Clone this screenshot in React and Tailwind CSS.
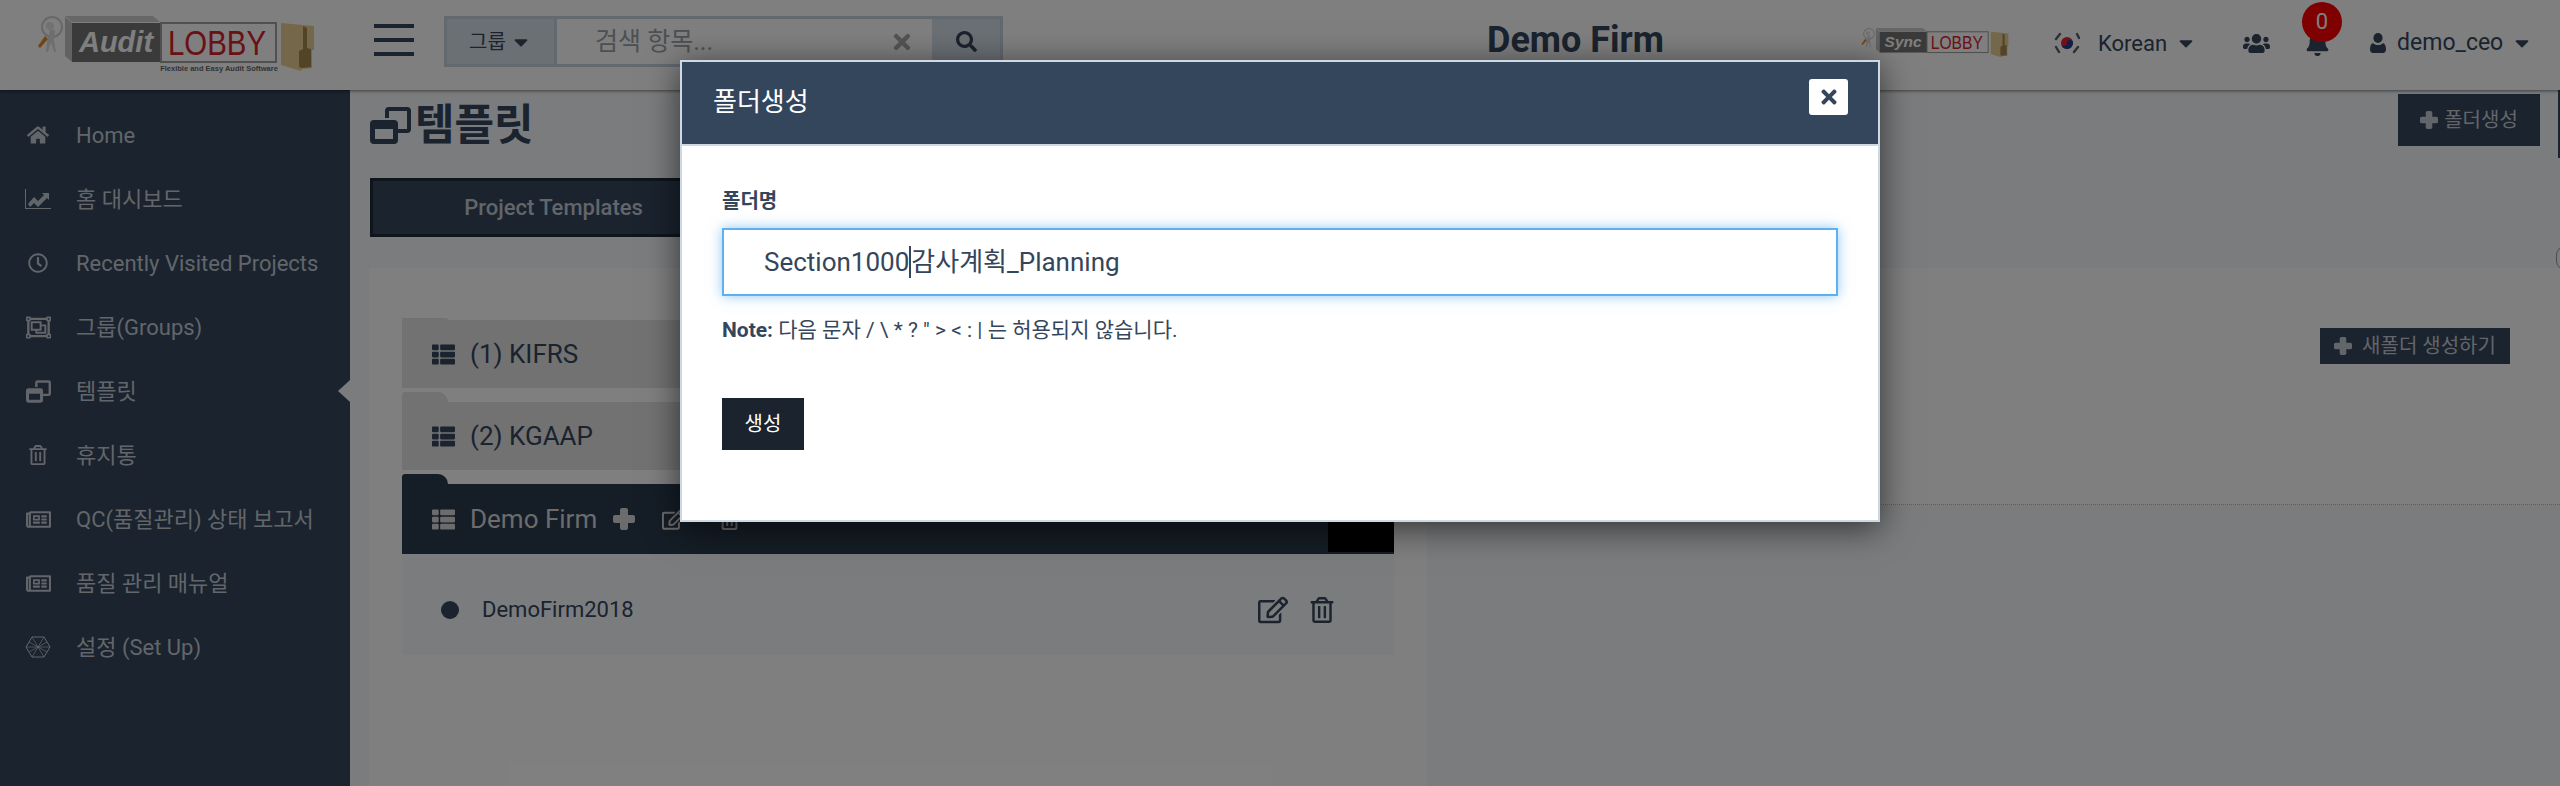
import React from "react";
import {
  FaHome,
  FaRegClock,
  FaRegObjectGroup,
  FaRegTrashAlt,
  FaRegNewspaper,
  FaThList,
  FaRegEdit,
  FaUsers,
  FaBell,
  FaTimes,
  FaSearch,
  FaCaretDown,
} from "react-icons/fa";

function LineChartIcon() {
  return (
    <svg width="26" height="20" viewBox="0 0 26 20" fill="currentColor">
      <path d="M0 0h1v19h25v1H0z" />
      <path d="M3 15l6-7 4 4 6-6-2-2h7v7l-2-2-9 9-4-4-4 4z" />
    </svg>
  );
}

function HexIcon() {
  return (
    <svg width="26" height="22" viewBox="0 0 26 22" fill="none" stroke="currentColor" strokeWidth="1">
      <path d="M7 1h12l6 10-6 10H7L1 11z" />
      <path d="M7 1l12 20M19 1L7 21M1 11h24M4 6l18 10M22 6L4 16" strokeWidth="0.7" />
    </svg>
  );
}

function CloneIcon({ width, height }) {
  return (
    <svg width={width} height={height} viewBox="0 0 41 37" fill="currentColor" fillRule="evenodd">
      <path d="M19 0h18a4 4 0 0 1 4 4v18a4 4 0 0 1-4 4H28v-4h9V4H19v7h-4V4a4 4 0 0 1 4-4z" />
      <path d="M4 13h20a4 4 0 0 1 4 4v16a4 4 0 0 1-4 4H4a4 4 0 0 1-4-4V17a4 4 0 0 1 4-4zM5 22v10h18V22z" />
    </svg>
  );
}

function PlusIcon({ size }) {
  return (
    <svg width={size} height={size} viewBox="0 0 22 22" fill="currentColor">
      <rect x="7" y="0" width="8" height="22" rx="2" />
      <rect x="0" y="7" width="22" height="8" rx="2" />
    </svg>
  );
}

function UserIcon() {
  return (
    <svg width="16" height="20" viewBox="0 0 16 20" fill="currentColor">
      <ellipse cx="8" cy="5" rx="4.6" ry="5" />
      <path d="M3 10c1 1.4 3 2 5 2s4-.6 5-2c2 .5 3 3 3 6.500 0 2-1.300 3.500-3 3.500H3c-1.700 0-3-1.500-3-3.500C0 13 1 10.500 3 10z" />
    </svg>
  );
}

function KoreaFlag() {
  return (
    <svg width="26" height="22" viewBox="0 0 26 22">
      <circle cx="13" cy="11" r="6" fill="#e2202c" />
      <path d="M7 11a6 6 0 0 0 12 0 3 3 0 0 0-6 0 3 3 0 0 1-6 0z" fill="#1b3f94" />
      <g stroke="#5a5f66" strokeWidth="2.4" strokeLinecap="round">
        <path d="M2 7l4-5M23 2l2 4M2 15l3 5M24 15l-4 5" />
      </g>
    </svg>
  );
}

function LobbyLogo({ word, size, tagline, className }) {
  return (
    <svg viewBox="0 0 280 58" className={className}>
      <circle cx="15" cy="11" r="10" fill="none" stroke="#d0d0d0" strokeWidth="2" />
      <circle cx="13" cy="10" r="4" fill="#e4e4e4" />
      <path d="M13 14l-3 12-1 10h2l3-10 3 10h2l-2-12 1-10z" fill="#dcdcdc" />
      <path d="M8 20L1 30l2 2 8-9z" fill="#e08a22" />
      <path d="M28 0h88l7 6H35z" fill="#cfcfcf" />
      <path d="M28 1l7 6v39l-7-6z" fill="#c4c4c4" />
      <rect x="35" y="7" width="89" height="39" fill="#747474" />
      <rect x="124" y="7" width="115" height="39" fill="#ffffff" stroke="#a0a0a0" strokeWidth="2" />
      <text x="79" y="36" textAnchor="middle" fontFamily="Liberation Sans" fontWeight="700" fontStyle="italic" fontSize={size} fill="#ffffff">
        {word}
      </text>
      <text x="180" y="39" textAnchor="middle" fontFamily="Liberation Sans" fontSize="35" fill="#d4222c" textLength="98" lengthAdjust="spacingAndGlyphs">
        LOBBY
      </text>
      {tagline && (
        <text x="182" y="55" textAnchor="middle" fontFamily="Liberation Sans" fontWeight="700" fontSize="7.500" fill="#666666">
          Flexible and Easy Audit Software
        </text>
      )}
      <path d="M244 7l33 3v24h-2v18l-10 1-1 2-20-6z" fill="#e9cf94" />
      <path d="M266 10l4 2v20l4 1v18l-9 1-3-1v-16l4-2z" fill="#a5894f" />
    </svg>
  );
}

const menu = [
  { label: "Home", icon: <FaHome size={22} /> },
  { label: "홈 대시보드", icon: <LineChartIcon /> },
  { label: "Recently Visited Projects", icon: <FaRegClock size={20} /> },
  { label: "그룹(Groups)", icon: <FaRegObjectGroup size={25} /> },
  { label: "템플릿", icon: <CloneIcon width={25} height={23} />, active: true },
  { label: "휴지통", icon: <FaRegTrashAlt size={20} /> },
  { label: "QC(품질관리) 상태 보고서", icon: <FaRegNewspaper size={25} /> },
  { label: "품질 관리 매뉴얼", icon: <FaRegNewspaper size={25} /> },
  { label: "설정 (Set Up)", icon: <HexIcon /> },
];

function Header() {
  return (
    <header className="relative z-10 flex h-[90px] items-center bg-white shadow-[0_1px_3px_rgba(0,0,0,0.5)]">
      <LobbyLogo word="Audit" size="29" tagline className="ml-[37px] h-[58px] w-[280px] shrink-0" />
      <div className="mb-[10px] ml-[57px] flex w-[40px] flex-col gap-[10px]">
        <span className="h-[4px] bg-[#34465c]" />
        <span className="h-[4px] bg-[#34465c]" />
        <span className="h-[4px] bg-[#34465c]" />
      </div>
      <div className="mb-[7px] ml-[30px] flex h-[51px] w-[559px] border-[3px] border-[#c5d2de] bg-white">
        <div className="flex w-[110px] items-center justify-center gap-[4px] border-r-[3px] border-[#c5d2de] bg-[#d7e1ea] text-[20px] text-[#34465c]">
          그룹
          <FaCaretDown size={22} />
        </div>
        <div className="flex flex-1 items-center justify-between pl-[38px] pr-[18px] text-[25px] text-[#9aa0a6]">
          검색 항목...
          <FaTimes size={24} className="text-[#a9a9a9]" />
        </div>
        <div className="flex w-[68px] items-center justify-center bg-[#d7e1ea] text-[#34465c]">
          <FaSearch size={21} />
        </div>
      </div>
      <div className="mb-[10px] ml-[484px] text-[36px] font-bold text-[#34465c]">Demo Firm</div>
      <div className="mb-[4px] flex items-center text-[#34465c]">
        <LobbyLogo word="Sync" size="29" className="ml-[197px] h-[31px] w-[149px] shrink-0" />
        <div className="ml-[44px] flex items-center text-[22px]">
          <KoreaFlag />
          <span className="ml-[18px]">Korean</span>
          <FaCaretDown size={22} className="ml-[8px]" />
        </div>
        <FaUsers size={27} className="ml-[46px]" />
        <div className="relative ml-[35px]">
          <FaBell size={25} />
          <span className="absolute left-[-3px] top-[-29px] flex h-[40px] w-[40px] items-center justify-center rounded-full bg-[#ff0000] text-[22px] text-white">
            0
          </span>
        </div>
        <span className="ml-[40px]">
          <UserIcon />
        </span>
        <span className="ml-[11px] text-[23px]">demo_ceo</span>
        <FaCaretDown size={22} className="ml-[8px]" />
      </div>
    </header>
  );
}

function Sidebar() {
  return (
    <aside className="w-[350px] shrink-0 bg-[#34465c] pt-[13px] text-[#c4ccd4]">
      {menu.map((item) => (
        <div key={item.label} className="relative flex h-[64px] items-center pl-[25px] text-[22px]">
          <span className="flex w-[26px] justify-center">{item.icon}</span>
          <span className="ml-[25px]">{item.label}</span>
          {item.active && (
            <span className="absolute right-0 top-[21px] h-0 w-0 border-y-[11px] border-r-[12px] border-y-transparent border-r-[#f6f8fc]" />
          )}
        </div>
      ))}
    </aside>
  );
}

function Folder({ tabHeight, dark, children }) {
  return (
    <div className="mb-[4px]">
      <div className={`${tabHeight} w-[46px] rounded-tl-[6px] rounded-tr-[18px] ${dark ? "bg-[#2a3b4c]" : "bg-[#e4e4e4]"}`} />
      <div className={`flex items-stretch ${dark ? "h-[70px] bg-[#2a3b4c] text-[#d8d8d8]" : "h-[68px] bg-[#e4e4e4] text-[#34465c]"}`}>
        {children}
      </div>
    </div>
  );
}

function FolderLabel({ label }) {
  return (
    <div className="flex items-center pl-[30px] text-[26px]">
      <FaThList size={23} />
      <span className="ml-[15px]">{label}</span>
    </div>
  );
}

function Main() {
  return (
    <main className="relative min-w-0 flex-1 bg-[#f6f8fc]">
      <div className="flex h-[74px] justify-between pl-[20px] pr-[20px] pt-[4px]">
        <h1 className="mt-[9px] flex h-[44px] items-center text-[43px] font-bold text-[#34465c]">
          <CloneIcon width={41} height={37} />
          <span className="ml-[4px]">템플릿</span>
        </h1>
        <button className="flex h-[52px] w-[142px] items-center justify-center gap-[6px] bg-[#34465c] text-[20px] text-[#c4ccd4]">
          <PlusIcon size={18} />
          폴더생성
        </button>
      </div>
      <div className="ml-[20px] mt-[14px] flex h-[59px] w-[367px] items-center justify-center border-[3px] border-[#1f2a37] bg-[#34465c] text-[22px] font-medium text-[#c4ccd4]">
        Project Templates
      </div>
      <div className="mt-[31px] ml-[19px] flex h-[518px] bg-[#f6f8fc]">
        <div className="w-[1058px] bg-white pl-[33px] pt-[50px]">
          <div className="w-[992px]">
            <Folder tabHeight="h-[2px]">
              <FolderLabel label="(1) KIFRS" />
            </Folder>
            <Folder tabHeight="h-[10px]">
              <FolderLabel label="(2) KGAAP" />
            </Folder>
            <div className="-mb-[4px]">
              <Folder tabHeight="h-[10px]" dark>
                <FolderLabel label="Demo Firm" />
                <div className="ml-[16px] flex items-center">
                  <PlusIcon size={22} />
                  <FaRegEdit size={23} className="ml-[27px]" />
                  <FaRegTrashAlt size={21} className="ml-[34px]" />
                </div>
                <div className="mb-[2px] ml-auto flex w-[66px] justify-center bg-black pt-[22px]">
                  <FaCaretDown size={16} />
                </div>
              </Folder>
            </div>
            <div className="flex h-[101px] items-center bg-[#f6f8fc] pl-[39px] pr-[59px] pt-[10px] text-[#34465c]">
              <span className="h-[18px] w-[18px] rounded-full bg-[#34465c]" />
              <span className="ml-[23px] text-[22px]">DemoFirm2018</span>
              <FaRegEdit size={30} className="ml-auto" />
              <FaRegTrashAlt size={26} className="ml-[21px]" />
            </div>
          </div>
        </div>
        <div className="flex h-[237px] flex-1 justify-end border-b border-dotted border-[#bbbbbb] bg-white pr-[50px] pt-[60px]">
          <button className="flex h-[36px] w-[190px] items-center justify-center gap-[10px] bg-[#34465c] text-[20px] text-[#c4ccd4]">
            <PlusIcon size={18} />
            새폴더 생성하기
          </button>
        </div>
      </div>
      <span className="absolute right-0 top-0 h-[68px] w-[2px] bg-[#34465c]" />
      <span className="absolute right-[-14px] top-[156px] h-[24px] w-[18px] rounded-full border border-[#999999]" />
    </main>
  );
}

function FolderModal() {
  return (
    <div className="absolute left-[680px] top-[60px] z-30 h-[462px] w-[1200px] border-2 border-[#cdd9e5] bg-white shadow-[0_6px_32px_rgba(0,0,0,0.6)]">
      <div className="flex h-[84px] items-start justify-between border-b-2 border-[#cdd9e5] bg-[#34465c] pl-[31px] pr-[30px]">
        <h2 className="mt-[23px] text-[26px] leading-[34px] text-white">폴더생성</h2>
        <button className="mt-[17px] flex h-[36px] w-[39px] items-center justify-center rounded-[3px] bg-white text-[#34465c]">
          <FaTimes size={22} />
        </button>
      </div>
      <div className="px-[40px] text-[#34465c]">
        <label className="mt-[42px] block text-[20px] font-bold leading-[26px]">폴더명</label>
        <div className="mt-[14px] flex h-[68px] items-center border-2 border-[#5fb0f0] pl-[40px] text-[26px] shadow-[0_0_12px_rgba(95,176,240,0.7)]">
          Section1000
          <span className="h-[32px] w-[2px] bg-[#34465c]" />
          감사계획_Planning
        </div>
        <p className="mt-[20px] text-[21px] leading-[28px]">
          <b>Note:</b> 다음 문자 / \ * ? " &gt; &lt; : | 는 허용되지 않습니다.
        </p>
        <button className="mt-[54px] flex h-[52px] w-[82px] items-center justify-center bg-[#1a232e] text-[20px] text-white">
          생성
        </button>
      </div>
    </div>
  );
}

export default function App() {
  return (
    <div className="relative h-[786px] w-[2560px] overflow-hidden font-[Roboto,'Noto_Sans_CJK_KR',sans-serif]">
      <Header />
      <div className="flex h-[696px]">
        <Sidebar />
        <Main />
      </div>
      <div className="absolute inset-0 z-20 bg-black/50" />
      <FolderModal />
    </div>
  );
}
